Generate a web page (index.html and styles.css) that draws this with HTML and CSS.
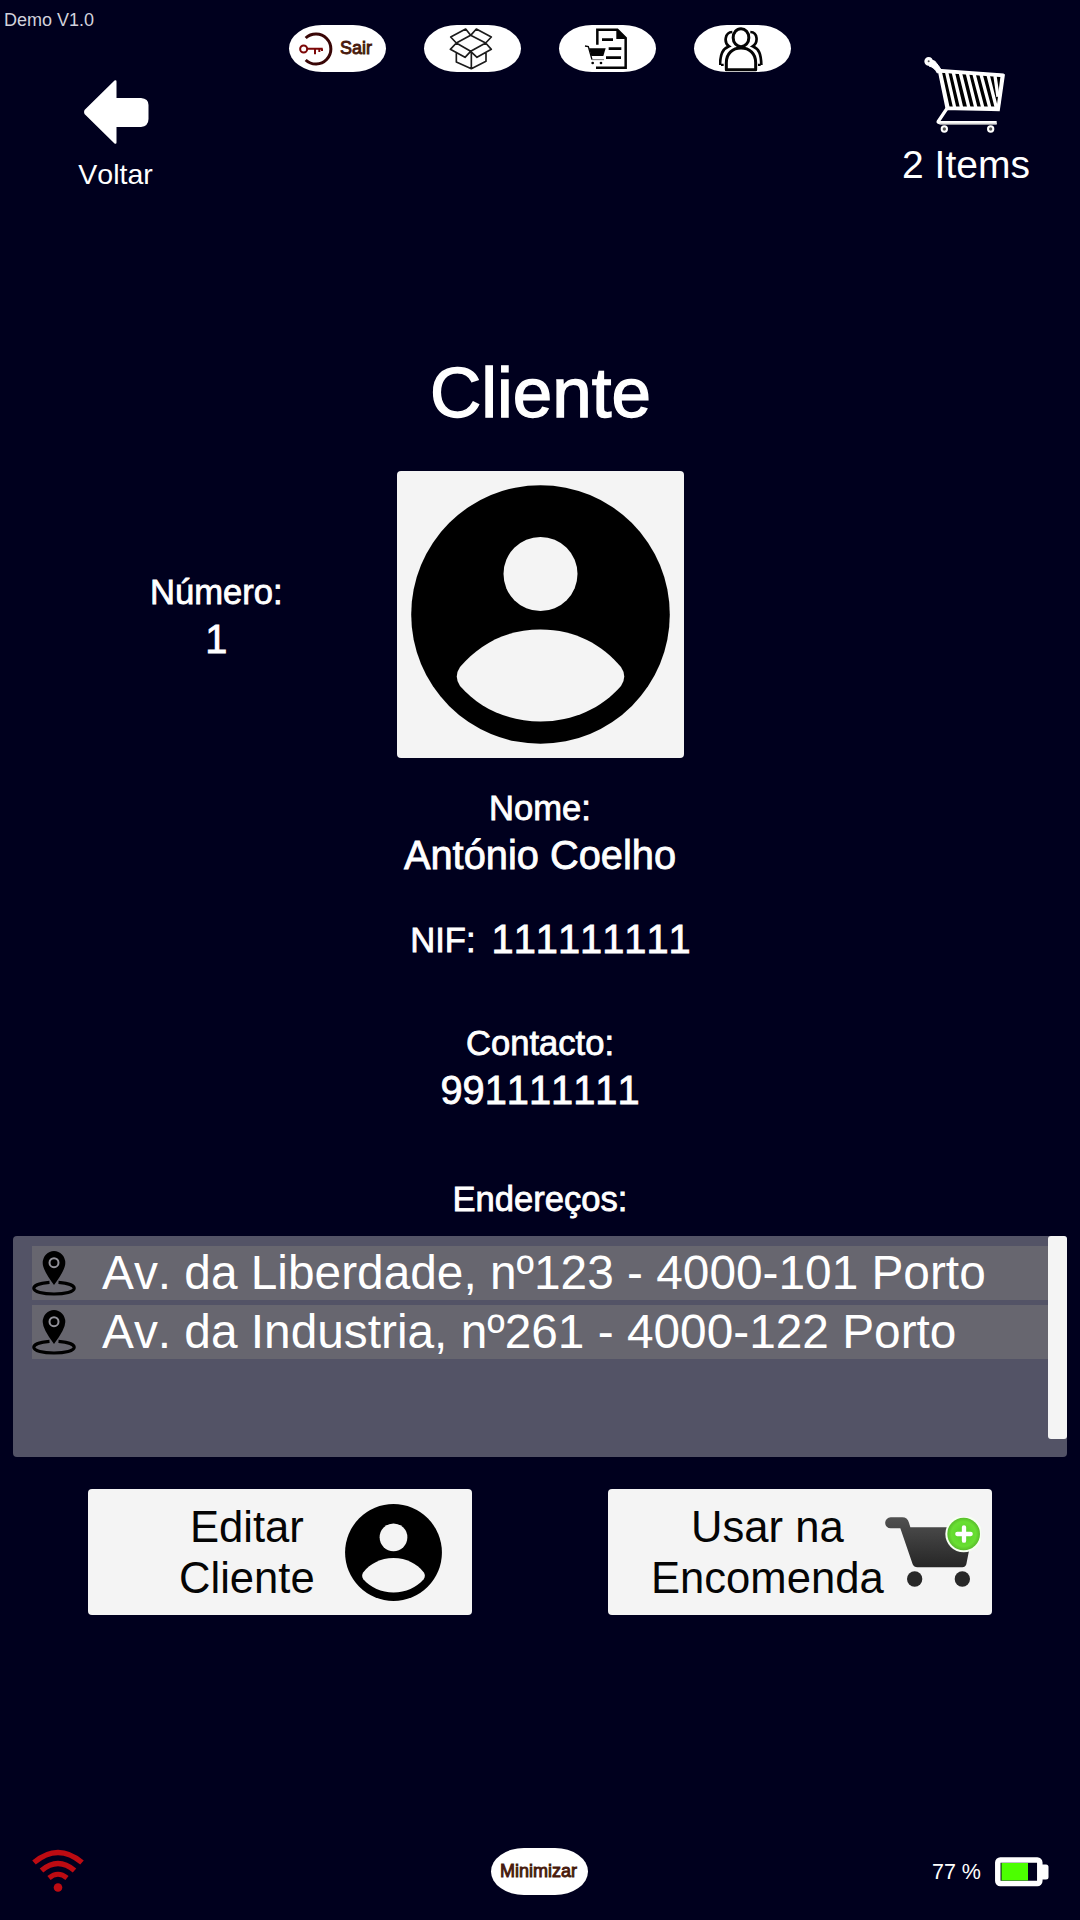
FILE: index.html
```html
<!DOCTYPE html>
<html lang="pt">
<head>
<meta charset="utf-8">
<title>Cliente</title>
<link rel="stylesheet" href="styles.css">
</head>
<body>
<header class="header">
  <div class="header-left">
    <div class="version">Demo V1.0</div>
    <a class="back">
      <svg width="66" height="66" viewBox="0 0 66 66"><path d="M1.500 31Q.5 33 1.500 35L31.500 64.500Q33.500 65.500 33.500 63.500V48H58Q65.500 47 65.500 40V26Q65.500 19.500 58 19H33.500V2.500Q33.500 .500 31.500 1.500Z" fill="#fff"/></svg>
      <span>Voltar</span>
    </a>
  </div>
  <nav class="nav">
    <a class="pill pill-exit">
      <svg width="36" height="36" viewBox="54 47 108 108" fill="none">
        <path d="M77 68A45 45 0 1 1 77 134" stroke="#390606" stroke-width="9"/>
        <circle cx="71" cy="101" r="10.500" stroke="#7c0707" stroke-width="6"/>
        <path d="M82 100H128M105 100V117M118 100V110M126 100V107" stroke="#7c0707" stroke-width="6"/>
      </svg>
      <span>Sair</span>
    </a>
    <a class="pill pill-icon">
      <svg width="44" height="44" viewBox="508 35 132 132" fill="none" stroke="#1c1c1c" stroke-width="5" stroke-linejoin="round">
        <path d="M573 60L530 83L573 108L618 83ZM530 83L513 65L558 41L573 60L590 41L635 65L618 83L635 102L592 126L573 108L556 126L512 102ZM530 113V140L575 160L619 138V113M575 108V160"/>
      </svg>
    </a>
    <a class="pill pill-icon">
      <svg width="44" height="44" viewBox="132 35 132 132" fill="none" stroke="#050505">
        <path d="M172 88V43H232L257 68V157H168" stroke-width="7.500"/>
        <path d="M229 41V71H260Z" fill="#050505" stroke="none"/>
        <path d="M186 73H219M206 100H244M198 127H243" stroke-width="8"/>
        <path d="M135 92L145 94L156 133" stroke-width="4"/>
        <path d="M147 99H197L190 122H154Z" fill="#050505" stroke="none"/>
        <path d="M156 133H192" stroke="#777" stroke-width="3"/>
        <g fill="#050505" stroke="none"><circle cx="158" cy="143" r="4"/><circle cx="183" cy="143" r="4"/></g>
      </svg>
    </a>
    <a class="pill pill-icon">
      <svg width="44" height="46" viewBox="538 32 132 138" fill="none" stroke="#050505" stroke-width="9">
        <ellipse cx="604" cy="67" rx="23.500" ry="27"/>
        <path d="M560 163V142C560 114 579 98 604 98S648 114 648 142V163Z" stroke-linejoin="round"/>
        <path d="M578 50C555 51 552 82 568 93C549 101 542 115 541 149M632 50C655 51 656 82 639 93C658 101 664 115 665 149M548 145V152M659 145V152" stroke-width="8"/>
      </svg>
    </a>
  </nav>
  <a class="cart">
    <svg width="82" height="80" viewBox="130 45 246 240" fill="none" stroke="#fff">
      <path d="M178 93L372 106L357 210L201 206Z" fill="#000" stroke-width="7"/>
      <path d="M182 97L206 207M201 97L226 207M221 98L247 208M242 99L269 208M263 100L290 209M283 102L311 209M304 103L332 209M325 104L350 203M346 108L355 170" stroke-width="10"/>
      <path d="M175 92L372 106" stroke-width="11"/>
      <path d="M200 205H357" stroke-width="11"/>
      <path d="M355 207L367 108" stroke-width="9"/>
      <path d="M153 60L165 63Q177 76 186 92L173 99Q164 82 148 78Z" fill="#fff" stroke-width="3"/>
      <circle cx="147" cy="64" r="8" fill="#555" stroke-width="10"/>
      <path d="M202 205L176 244Q174 248 184 248H351" stroke-width="10"/>
      <path d="M180 251H351" stroke="#ddd" stroke-width="5"/>
      <circle cx="194" cy="267" r="8" fill="#555" stroke-width="6"/>
      <circle cx="333" cy="267" r="8" fill="#555" stroke-width="6"/>
    </svg>
    <span>2 Items</span>
  </a>
</header>

<main class="main">
  <h1 class="title">Cliente</h1>
  <section class="profile">
    <div class="field number">
      <span class="label">Número:</span>
      <span class="value">1</span>
    </div>
    <div class="avatar">
      <svg width="259" height="259" viewBox="0 0 259 259"><circle cx="129.500" cy="129.500" r="129.300"/><circle cx="129.500" cy="89" r="37" fill="#f4f4f4"/><path d="M129.500 144.500C165 144.500 191 160 210 182Q216.500 191.500 210 201C191 223 162 236.500 129.500 236.500S68 223 49 201Q42.500 191.500 49 182C68 160 94 144.500 129.500 144.500Z" fill="#f4f4f4"/></svg>
    </div>
  </section>
  <div class="field name">
    <span class="label">Nome:</span>
    <span class="value">António Coelho</span>
  </div>
  <div class="nif">
    <span class="label">NIF:</span>
    <span class="value">111111111</span>
  </div>
  <div class="field contact">
    <span class="label">Contacto:</span>
    <span class="value">991111111</span>
  </div>
  <section class="field addresses">
    <span class="label">Endereços:</span>
    <div class="list">
      <ul class="rows">
        <li class="row">
          <svg width="44" height="46" viewBox="0 0 44 46"><path d="M22 35Q10.700 20 10.700 13A11.300 12 0 0 1 33.300 13Q33.300 20 22 35Z"/><circle cx="22" cy="12.700" r="4.500" stroke="#929199" stroke-width="2"/><path d="M17.500 32.300C8 33 1.800 35.500 1.800 38.300C1.800 41.800 11 44 22 44S42.200 41.800 42.200 38.300C42.200 35.500 36 33 26.500 32.300" fill="none" stroke="#000" stroke-width="3.200"/></svg>
          <span>Av. da Liberdade, nº123 - 4000-101 Porto</span>
        </li>
        <li class="row">
          <svg width="44" height="46" viewBox="0 0 44 46"><path d="M22 35Q10.700 20 10.700 13A11.300 12 0 0 1 33.300 13Q33.300 20 22 35Z"/><circle cx="22" cy="12.700" r="4.500" stroke="#929199" stroke-width="2"/><path d="M17.500 32.300C8 33 1.800 35.500 1.800 38.300C1.800 41.800 11 44 22 44S42.200 41.800 42.200 38.300C42.200 35.500 36 33 26.500 32.300" fill="none" stroke="#000" stroke-width="3.200"/></svg>
          <span>Av. da Industria, nº261 - 4000-122 Porto</span>
        </li>
      </ul>
      <div class="scrollbar"></div>
    </div>
  </section>
  <div class="actions">
    <a class="button button-edit">
      <span>Editar<br>Cliente</span>
      <svg width="97" height="97" viewBox="0 0 259 259"><circle cx="129.500" cy="129.500" r="129.300"/><circle cx="129.500" cy="89" r="37" fill="#f4f4f4"/><path d="M129.500 144.500C165 144.500 191 160 210 182Q216.500 191.500 210 201C191 223 162 236.500 129.500 236.500S68 223 49 201Q42.500 191.500 49 182C68 160 94 144.500 129.500 144.500Z" fill="#f4f4f4"/></svg>
    </a>
    <a class="button button-use">
      <span>Usar na<br>Encomenda</span>
      <svg width="96" height="70" viewBox="884 128 288 210">
        <defs>
          <linearGradient id="cartShade" x1="0" y1="0" x2="0" y2="1"><stop offset="0" stop-color="#505050"/><stop offset="1" stop-color="#262626"/></linearGradient>
          <radialGradient id="plusShade"><stop offset="0" stop-color="#55cf28"/><stop offset=".75" stop-color="#69df32"/><stop offset="1" stop-color="#58bd2b"/></radialGradient>
        </defs>
        <path d="M901 129H936Q951 129 956 145L960 159H1150L1128 270Q1125 279 1116 279H981Q971 279 967 270L930 162H901A16 16 0 0 1 901 129Z" fill="url(#cartShade)"/>
        <circle cx="973" cy="314" r="23" fill="#282828"/>
        <circle cx="1116" cy="314" r="23" fill="#282828"/>
        <circle cx="1120" cy="179" r="55" fill="#f7fff2"/>
        <circle cx="1120" cy="179" r="49" fill="url(#plusShade)"/>
        <path d="M1121 159V199M1101 179H1141" stroke="#fff" stroke-width="13" stroke-linecap="round"/>
      </svg>
    </a>
  </div>
</main>

<footer class="footer">
  <svg class="wifi" width="52" height="46" viewBox="0 0 52 46" fill="none" stroke="#bd0b12">
    <path d="M2 13.500Q26 -6.500 50 13.500" stroke-width="5.500"/>
    <path d="M9.500 21.500Q26 7.500 42.500 21.500" stroke-width="5.500"/>
    <path d="M17 29Q26 21.500 35 29" stroke-width="5"/>
    <circle cx="26" cy="38.500" r="4.300" fill="#bd0b12" stroke="none"/>
  </svg>
  <a class="pill pill-minimize">Minimizar</a>
  <div class="battery">
    <span>77 %</span>
    <svg width="54" height="30" viewBox="0 0 54 30"><path d="M47 7.500h4q2.500 0 2.500 2.500v10q0 2.500-2.500 2.500h-4z" fill="#fff"/><rect x="2.800" y="3" width="42" height="23.500" rx="2.500" fill="#00001e" stroke="#fff" stroke-width="5.500"/><rect x="6.500" y="6" width="26.500" height="17.500" fill="#4cff00"/></svg>
  </div>
</footer>
</body>
</html>
```
FILE: styles.css
```css
* {
  box-sizing: border-box;
}

body {
  margin: 0;
  width: 1080px;
  height: 1920px;
  display: flex;
  flex-direction: column;
  overflow: hidden;
  background: #00001e;
  color: #fff;
  font-family: "Liberation Sans", Arial, sans-serif;
  font-kerning: none;
}

svg {
  display: block;
  flex: none;
}

.header {
  display: grid;
  grid-template-columns: 289px 502px 1fr;
  height: 352px;
}

.version {
  padding: 8px 0 0 4px;
  height: 32px;
  font-size: 18px;
  line-height: 24px;
  color: #d2d2dc;
}

.back {
  display: flex;
  flex-direction: column;
  align-items: center;
  width: 72px;
  margin: 47px 0 0 79.5px;
  font-size: 28.5px;
  line-height: 32px;
}

.back svg {
  margin: 0 0 12.5px;
}

.nav {
  display: flex;
  justify-content: space-between;
  padding-top: 25px;
}

.pill {
  display: flex;
  align-items: center;
  justify-content: center;
  width: 97px;
  height: 47px;
  border-radius: 33px / 23.5px;
  background: #fff;
  color: #481a0c;
  font-size: 18px;
  -webkit-text-stroke: 0.9px #481a0c;
}

.pill-exit {
  justify-content: flex-start;
  gap: 6px;
  padding-left: 9px;
}

.pill-icon {
  padding-right: 4px;
}

.cart {
  display: flex;
  flex-direction: column;
  align-items: center;
  width: 140px;
  margin: 55px 0 0 105px;
  font-size: 39px;
  line-height: 44px;
}

.cart svg {
  margin: 0 4px 8px 0;
}

.main {
  display: flex;
  flex-direction: column;
}

.title {
  margin: 0;
  padding-left: 1px;
  font-size: 71px;
  font-weight: 400;
  line-height: 81px;
  text-align: center;
  -webkit-text-stroke: 1.4px #fff;
}

.profile {
  display: grid;
  grid-template-columns: 396.5px 287px;
  align-items: center;
  height: 287px;
  margin-top: 37.5px;
}

.field {
  display: flex;
  flex-direction: column;
  align-items: center;
}

.label,
.value {
  -webkit-text-stroke: 0.8px #fff;
}

.label {
  font-size: 34.6px;
  line-height: 48px;
}

.value {
  font-size: 39.8px;
  line-height: 47px;
}

.number {
  padding: 2px 0 0 36px;
}

.avatar {
  display: flex;
  align-items: center;
  justify-content: center;
  height: 287px;
  border-radius: 4px;
  background: #f4f4f4;
}

.name {
  margin-top: 26px;
}

.nif {
  display: flex;
  align-items: flex-start;
  justify-content: center;
  gap: 16px;
  height: 47px;
  margin-top: 37px;
  padding-left: 21px;
}

.contact {
  margin-top: 56px;
}

.addresses {
  margin-top: 61.5px;
}

.list {
  display: flex;
  align-items: flex-start;
  align-self: stretch;
  height: 221px;
  margin: 13px 13px 0;
  border-radius: 4px;
  background: #535366;
}

.rows {
  display: flex;
  flex: 1;
  flex-direction: column;
  gap: 5px;
  margin: 0;
  padding: 10px 0 0 19px;
  list-style: none;
}

.row {
  display: flex;
  align-items: center;
  gap: 26px;
  height: 54px;
  background: #67666f;
  font-size: 47.8px;
  line-height: 54px;
  white-space: nowrap;
}

.scrollbar {
  width: 19px;
  height: 203px;
  border-radius: 3px;
  background: #f4f4f4;
}

.actions {
  display: flex;
  justify-content: space-between;
  margin: 32px 88px 0;
}

.button {
  display: flex;
  align-items: center;
  width: 384px;
  height: 126px;
  border-radius: 4px;
  background: #f4f4f4;
  color: #050505;
  font-size: 43.6px;
  line-height: 50.6px;
  text-align: center;
}

.button span {
  padding-top: 2px;
}

.button-edit {
  gap: 30px;
  padding-left: 91px;
}

.button-use {
  gap: 1px;
  padding-left: 43px;
}

.footer {
  display: grid;
  grid-template-columns: 491px 97px 1fr;
  align-items: center;
  height: 47px;
  margin: auto 0 25px;
}

.wifi {
  margin-left: 32px;
}

.pill-minimize {
  padding-right: 2px;
}

.battery {
  display: flex;
  align-items: center;
  justify-content: flex-end;
  gap: 14px;
  padding: 1px 31px 0 0;
  font-size: 21.5px;
}
```
